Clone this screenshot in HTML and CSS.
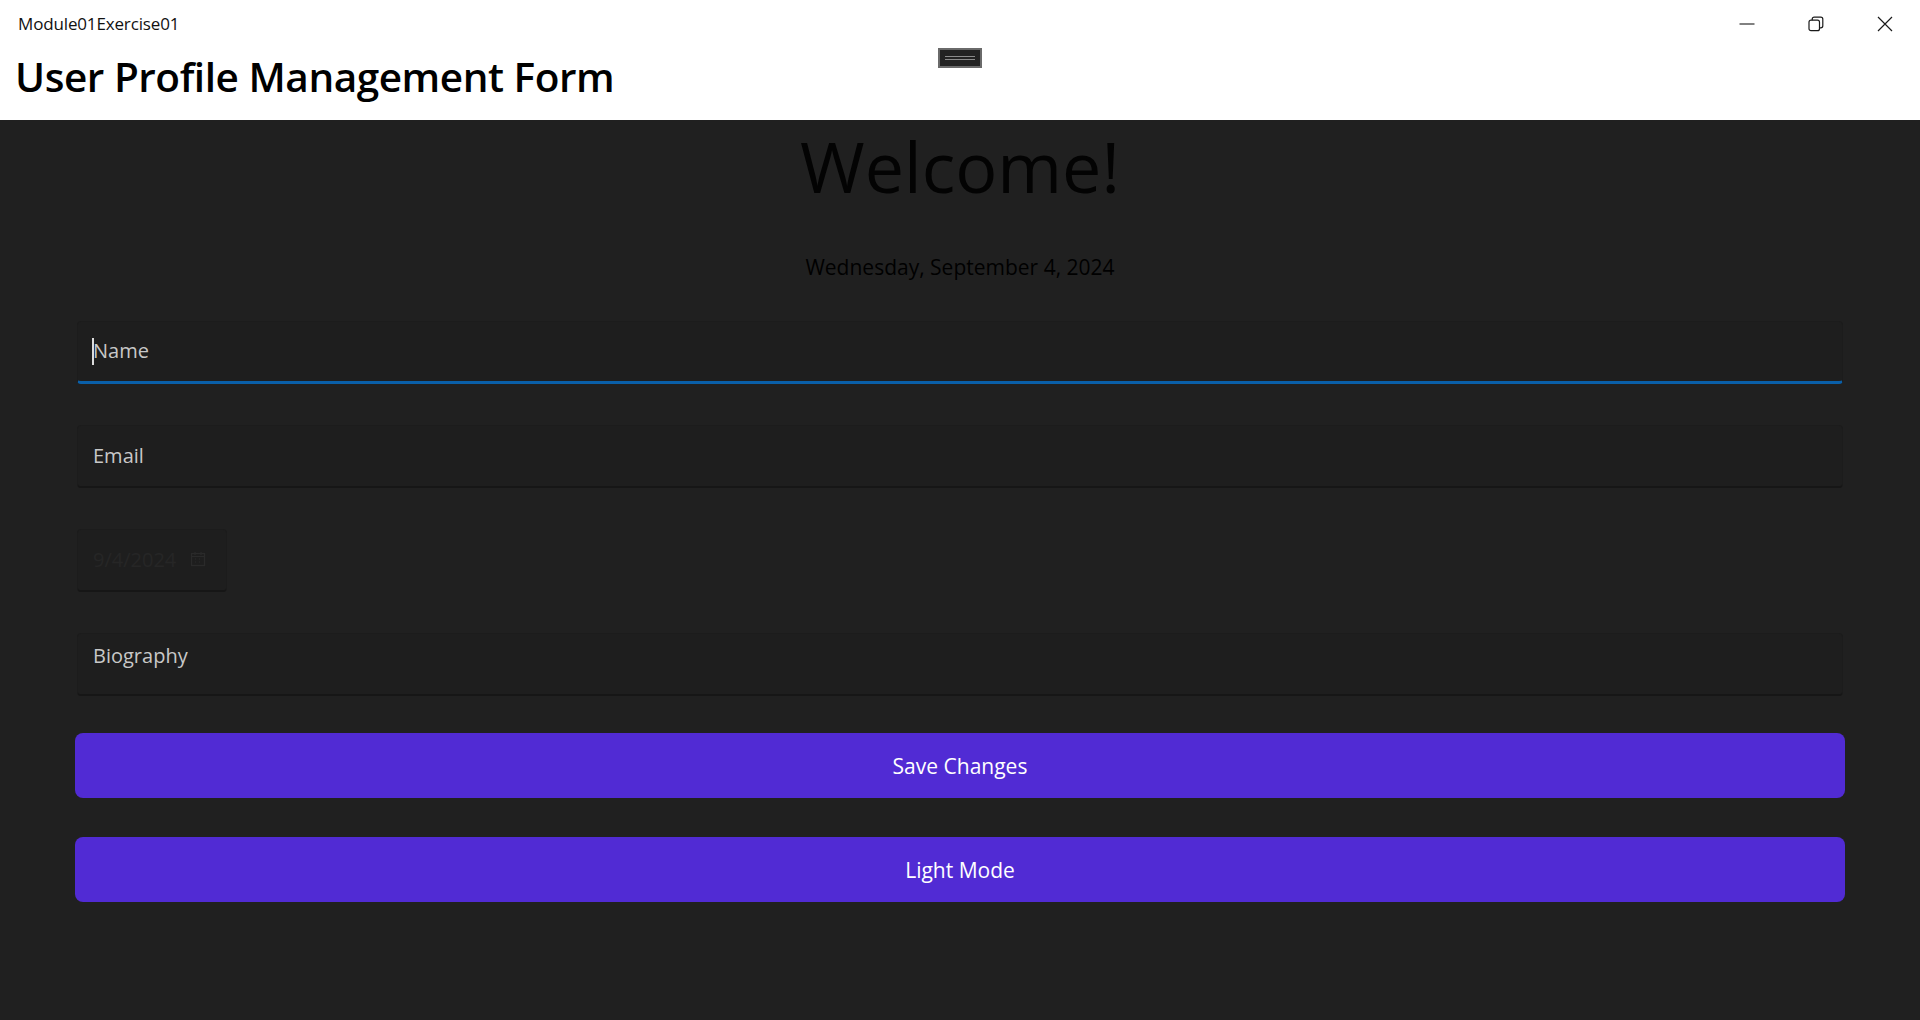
FILE: index.html
```html
<!DOCTYPE html>
<html lang="en">
<head>
<meta charset="utf-8">
<title>Module01Exercise01</title>
<link rel="stylesheet" href="styles.css">
</head>
<body>
<header class="window-header">
  <div class="titlebar">
    <span class="app-title">Module01Exercise01</span>
    <div class="win-controls">
      <span class="win-btn"><svg width="16" height="16" viewBox="0 0 16 16"><path d="M0.5 8h15" stroke="#1a1a1a" stroke-width="1.1" fill="none"/></svg></span>
      <span class="win-btn"><svg width="16" height="16" viewBox="0 0 16 16"><rect x="1" y="4.2" width="10.5" height="10.5" rx="2" stroke="#1a1a1a" stroke-width="1.2" fill="none"/><path d="M4.2 4.2V3.2A2 2 0 0 1 6.2 1.2H12.8A2 2 0 0 1 14.8 3.2V9.8A2 2 0 0 1 12.8 11.8H11.5" stroke="#1a1a1a" stroke-width="1.2" fill="none"/></svg></span>
      <span class="win-btn"><svg width="16" height="16" viewBox="0 0 16 16"><path d="M1 1l14 14M15 1L1 15" stroke="#1a1a1a" stroke-width="1.2" fill="none"/></svg></span>
    </div>
  </div>
  <h1 class="page-heading">User Profile Management Form</h1>
  <div class="drag-handle"><span class="grip"></span></div>
</header>
<main class="content">
  <div class="welcome">Welcome!</div>
  <div class="today">Wednesday, September 4, 2024</div>
  <div class="form">
    <div class="field focused"><span class="caret"></span><span class="placeholder">Name</span></div>
    <div class="field"><span class="placeholder">Email</span></div>
    <div class="field datepicker"><span class="date-text">9/4/2024</span><svg class="cal" width="16" height="16" viewBox="0 0 16 16"><rect x="1.5" y="2.5" width="13" height="12" stroke="#2a2a2a" stroke-width="1.2" fill="none"/><path d="M1.5 5.5h13M5 1v3M11 1v3M5 8h1M9 8h1M5 11h1M9 11h1" stroke="#2a2a2a" stroke-width="1.2"/></svg></div>
    <div class="field editor"><span class="placeholder">Biography</span></div>
    <button class="action save">Save Changes</button>
    <button class="action mode">Light Mode</button>
  </div>
</main>
</body>
</html>
```
FILE: styles.css
```css
* { box-sizing: border-box; }
html, body { margin: 0; padding: 0; }
body {
  width: 1920px;
  height: 1020px;
  overflow: hidden;
  background: #202020;
  font-family: "Open Sans", "Noto Sans", sans-serif;
}
.window-header {
  position: relative;
  height: 120px;
  background: #ffffff;
  display: flex;
  flex-direction: column;
}
.titlebar {
  height: 48px;
  display: flex;
  align-items: center;
  justify-content: space-between;
  padding-left: 18px;
  padding-right: 1px;
}
.app-title {
  font-family: "Open Sans", sans-serif;
  font-size: 17px;
  color: #111;
  letter-spacing: -0.15px;
  margin-top: -1px;
}
.win-controls {
  display: flex;
  align-self: flex-start;
  height: 48px;
}
.win-btn {
  width: 69px;
  height: 48px;
  display: flex;
  align-items: center;
  justify-content: center;
}
.page-heading {
  margin: 2px 0 0 15px;
  font-family: "Open Sans", sans-serif;
  font-weight: 600;
  font-size: 40.5px;
  line-height: 54px;
  color: #000;
  letter-spacing: -0.45px;
}
.drag-handle {
  position: absolute;
  left: 938px;
  top: 48px;
  width: 44px;
  height: 20px;
  border: 2px solid #6a6a6a;
  background: #222;
  display: flex;
  align-items: center;
  justify-content: center;
}
.grip {
  width: 30px;
  height: 4px;
  border-top: 1px solid #8a8a8a;
  border-bottom: 1px solid #8a8a8a;
}
.content {
  padding: 10px 75px 0;
}
.welcome {
  text-align: center;
  font-size: 70px;
  line-height: 72px;
  color: #030303;
}
.today {
  margin-top: 51px;
  text-align: center;
  font-size: 21px;
  line-height: 28px;
  color: #000;
}
.form {
  margin-top: 40px;
  display: flex;
  flex-direction: column;
  gap: 41px;
}
.field {
  position: relative;
  margin: 0 2px;
  height: 63px;
  background: #1e1e1e;
  border: 1px solid #1c1c1c;
  border-bottom: 2px solid #161616;
  border-radius: 4px;
  display: flex;
  align-items: center;
  padding: 0 15px 2px;
}
.field.focused {
  border-bottom: 3px solid #0a5fa8;
}
.field.editor {
  align-items: flex-start;
  padding-top: 8px;
}
.placeholder {
  font-size: 20px;
  color: #c8c8c8;
}
.caret {
  position: absolute;
  left: 14px;
  top: 16px;
  width: 2px;
  height: 27px;
  background: #dcdcdc;
}
.datepicker {
  width: 150px;
  gap: 14px;
}
.date-text {
  font-size: 20px;
  color: #262626;
}
.action {
  height: 65px;
  border: none;
  border-radius: 8px;
  background: #512bd4;
  color: #fff;
  font-family: "Open Sans", sans-serif;
  font-size: 21px;
  padding: 0;
}
.action.save { margin-top: -4px; }
.action.mode { margin-top: -2px; }
```
